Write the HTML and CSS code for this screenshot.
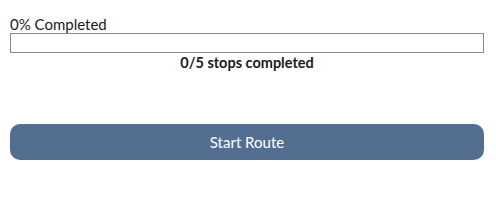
FILE: index.html
```html
<!DOCTYPE html>
<html lang="en">
<head>
  <meta charset="UTF-8">
  <title>Route progress</title>
  <link rel="stylesheet" href="styles.css">
</head>
<body>

  <div class="progress-panel">
    <div class="progress-label">0% Completed</div>
    <div class="progress-bar">
      <div class="progress-fill" style="width: 0%"></div>
    </div>
    <div class="progress-stops">0/5 stops completed</div>
  </div>

  <button class="start-btn">Start Route</button>

</body>
</html>
```

FILE: styles.css
```css
body {
  font-family: Lato, "Noto Sans", sans-serif;
  margin: 0;
  padding: 15px 12px 0 10px;
  color: #1a1a1a;
  background: #fff;
}
/* Progress block */
.progress-label {
  font-size: 15px;
  line-height: 18px;
}
.progress-bar {
  height: 18px;
  border: 1px solid #8a8a8a;
  background-color: #fff;
}
.progress-fill {
  height: 100%;
  background-color: #546e92;
}
.progress-stops {
  text-align: center;
  font-size: 14.5px;
  font-weight: bold;
  line-height: 20px;
}
/* Button */
.start-btn {
  display: block;
  width: 100%;
  height: 36px;
  margin-top: 51px;
  border: none;
  border-radius: 10px;
  background-color: #546e92;
  color: #fff;
  font-family: inherit;
  font-size: 15px;
  cursor: pointer;
}
```
